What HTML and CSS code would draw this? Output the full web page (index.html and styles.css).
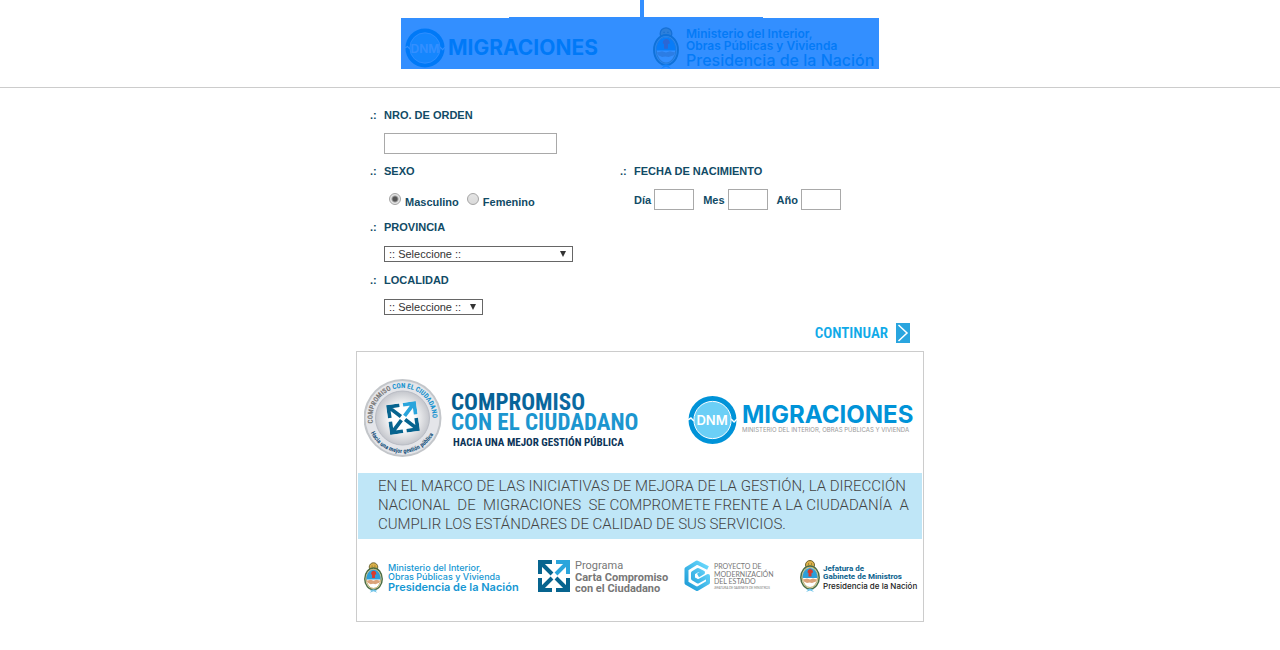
FILE: index.html
```html
<!DOCTYPE html>
<html lang="es">
<head>
<meta charset="utf-8">
<title>Dirección Nacional de Migraciones</title>
<link rel="stylesheet" href="styles.css">
</head>
<body>
<svg class="defs" width="0" height="0" aria-hidden="true">
  <defs>
    <symbol id="crest" viewBox="0 0 20 32">
      <circle class="c-sun" cx="10" cy="5" r="4.5"/>
      <path class="c-face" d="M8 4h1M11 4h1M8 6.500h4"/>
      <ellipse class="c-wreath" cx="10" cy="17.500" rx="9.200" ry="11.500"/>
      <ellipse class="c-low" cx="10" cy="17.500" rx="7.500" ry="10"/>
      <path class="c-sky" d="M2.500 18C2.500 4.500 17.500 4.500 17.500 18z"/>
      <path class="c-cap" d="M8.500 16.500V13L7.500 12.500q0-3.500 3-3.500 2.500.5 2.500 3.500l-1.500.5v3.500z"/>
      <path class="c-hands" d="M3 19.500l4-1 3 1 3-1 4 1-1 2-4 1.500-2.500-.5-2.500.5-3-1.500z"/>
      <path class="c-ribbon" d="M6 29.500l4-1 4 1-2 .500 2 2-4-1.500-4 1.500 2-2z"/>
    </symbol>
    <symbol id="dnm" viewBox="0 0 50 50">
      <circle class="d-ring" cx="25" cy="25" r="24.500"/>
      <circle class="d-disc" cx="25" cy="25" r="19"/>
      <path class="d-wave" d="M0 25l3-2 3 3M50 24l-3 3-3-3"/>
    </symbol>
    <symbol id="thin-arrows" viewBox="0 0 32 32">
      <g class="t-dark">
        <path d="M2 14V2h12M3 3l11 11"/>
        <path d="M2 18v12h12M3 29l11-11"/>
        <path d="M30 18v12H18M29 29L18 18"/>
      </g>
      <path class="t-light" d="M30 14V2H18M29 3L18 14"/>
    </symbol>
  </defs>
</svg>

<header class="header">
  <div class="stem"></div>
  <div class="edge"></div>
  <svg class="masthead" viewBox="0 0 478 51" role="img" aria-label="Migraciones, Presidencia de la Nación">
    <use href="#dnm" x="4" y="10" width="40" height="40"/>
    <text class="dnm-text" x="24" y="35" font-size="12" text-anchor="middle">DNM</text>
    <text class="brand" x="47" y="37" font-size="21">MIGRACIONES</text>
    <use href="#crest" x="252" y="9" width="26" height="42"/>
    <text class="ministry strong" x="285" y="20" font-size="12">Ministerio del Interior,</text>
    <text class="ministry strong" x="285" y="32" font-size="12">Obras Públicas y Vivienda</text>
    <text class="ministry" x="285" y="48" font-size="16">Presidencia de la Nación</text>
    <rect class="veil" width="478" height="51"/>
  </svg>
</header>

<main class="main">
  <form class="form">
    <div class="field">
      <label class="caption" for="orden">NRO. DE ORDEN</label>
      <div class="control"><input class="box" id="orden" type="text"></div>
    </div>
    <div class="pair">
      <div class="field" role="radiogroup" aria-labelledby="sexo">
        <span class="caption" id="sexo">SEXO</span>
        <div class="control radios">
          <label class="option"><input class="radio" type="radio" name="sexo" checked>Masculino</label>
          <label class="option"><input class="radio" type="radio" name="sexo">Femenino</label>
        </div>
      </div>
      <div class="field" role="group" aria-labelledby="fecha">
        <span class="caption" id="fecha">FECHA DE NACIMIENTO</span>
        <div class="control dates">
          <label class="part">Día<input class="box small" type="text"></label>
          <label class="part">Mes<input class="box small" type="text"></label>
          <label class="part">Año<input class="box small" type="text"></label>
        </div>
      </div>
    </div>
    <div class="field">
      <label class="caption" for="provincia">PROVINCIA</label>
      <div class="control choice"><span class="drop wide"><select class="select" id="provincia"><option>:: Seleccione ::</option></select></span></div>
    </div>
    <div class="field">
      <label class="caption" for="localidad">LOCALIDAD</label>
      <div class="control choice"><span class="drop"><select class="select" id="localidad"><option>:: Seleccione ::</option></select></span></div>
    </div>
    <button class="next" type="submit">CONTINUAR
      <svg class="next-icon" viewBox="0 0 14 20" aria-hidden="true"><path class="next-bg" d="M0 0h14v20H0z"/><path class="next-arrow" d="M2.500 2l8.500 8-8.500 8"/></svg>
    </button>
  </form>

  <section class="panel">
    <div class="top">
      <svg class="commitment" viewBox="0 0 282 82" role="img" aria-label="Compromiso con el ciudadano">
        <defs>
          <radialGradient id="steel"><stop offset="0.4" stop-color="#fff"/><stop offset="1" stop-color="#c4c6cc"/></radialGradient>
          <linearGradient id="deep"><stop offset="0" stop-color="#045d90"/><stop offset="1" stop-color="#0a6ba3"/></linearGradient>
          <path id="arc-top" d="M9 46.200A30 30 0 1 1 66 53"/>
          <path id="arc-bottom" d="M6.800 55.800A35 35 0 0 0 73.500 41"/>
        </defs>
        <circle cx="38.500" cy="41" r="39" fill="#c3c6ca"/>
        <circle cx="38.500" cy="41" r="37" fill="#e4e5e9"/>
        <circle cx="38.500" cy="41" r="27" fill="url(#steel)" stroke="#b9bcc4"/>
        <text class="seal-text"><textPath href="#arc-top"><tspan fill="#777">COMPROMISO</tspan> <tspan fill="#1592cf">CON EL CIUDADANO</tspan></textPath></text>
        <text class="seal-text low"><textPath href="#arc-bottom">Hacia una mejor gestión pública</textPath></text>
        <g transform="rotate(-8 39 41)"><use href="#thin-arrows" x="24" y="26" width="30" height="30"/></g>
        <text class="narrow" x="87" y="33" font-size="23" fill="url(#deep)">COMPROMISO</text>
        <text class="narrow" x="87" y="53" font-size="23" fill="#1c96cf">CON EL CIUDADANO</text>
        <text class="narrow" x="89" y="69" font-size="11" fill="#0b3458">HACIA UNA MEJOR GESTIÓN PÚBLICA</text>
      </svg>
      <svg class="migraciones" viewBox="0 0 232 50" role="img" aria-label="Migraciones">
        <use href="#dnm" x="0" y="0" width="49" height="50"/>
        <text class="dnm-text" x="24" y="30" font-size="13" text-anchor="middle">DNM</text>
        <text class="brand" x="54" y="28" font-size="24">MIGRACIONES</text>
        <text class="tagline" x="54" y="37" font-size="6">MINISTERIO DEL INTERIOR, OBRAS PÚBLICAS Y VIVIENDA</text>
      </svg>
    </div>
    <p class="band">EN EL MARCO DE LAS INICIATIVAS DE MEJORA DE LA GESTIÓN, LA DIRECCIÓN
NACIONAL  DE  MIGRACIONES  SE COMPROMETE FRENTE A LA CIUDADANÍA  A
CUMPLIR LOS ESTÁNDARES DE CALIDAD DE SUS SERVICIOS.</p>
    <div class="sponsors">
      <svg class="presidencia" viewBox="0 0 160 36" role="img" aria-label="Presidencia de la Nación">
        <use href="#crest" x="0" y="3" width="19" height="31"/>
        <text class="ministry" x="24" y="12" font-size="9">Ministerio del Interior,</text>
        <text class="ministry" x="24" y="21" font-size="9">Obras Públicas y Vivienda</text>
        <text class="ministry strong" x="24" y="32" font-size="11">Presidencia de la Nación</text>
      </svg>
      <svg class="carta" viewBox="0 0 132 36" role="img" aria-label="Programa Carta Compromiso">
        <use href="#thin-arrows" x="0" y="1" width="32" height="32"/>
        <text class="carta-text" x="37" y="10" font-size="11">Programa</text>
        <text class="carta-text bold" x="37" y="22" font-size="11">Carta Compromiso</text>
        <text class="carta-text bold" x="37" y="33" font-size="11">con el Ciudadano</text>
      </svg>
      <svg class="proyecto" viewBox="0 0 102 36" role="img" aria-label="Proyecto de modernización del Estado">
        <defs><linearGradient id="hex" x1="0" y1="1" x2="1" y2="0"><stop offset="0" stop-color="#1b9ad6"/><stop offset="1" stop-color="#6fdcff"/></linearGradient></defs>
        <path d="M24 9L13 3.500 2.500 10v14L13 30l11-6.500V17l-10 5.500-5-3V14l5-3 5 2.500-5 3" fill="none" stroke="url(#hex)" stroke-width="4" stroke-linejoin="round"/>
        <text class="project" x="30" y="10" font-size="7">PROYECTO DE</text>
        <text class="project" x="30" y="18" font-size="7">MODERNIZACIÓN</text>
        <text class="project" x="30" y="25" font-size="7">DEL ESTADO</text>
        <text class="project" x="30" y="30" font-size="3">JEFATURA DE GABINETE DE MINISTROS</text>
      </svg>
      <svg class="jefatura" viewBox="0 0 119 36" role="img" aria-label="Jefatura de Gabinete de Ministros">
        <use href="#crest" x="0" y="1" width="20" height="32"/>
        <text class="cabinet" x="23" y="12" font-size="8">Jefatura de</text>
        <text class="cabinet" x="23" y="20" font-size="8">Gabinete de Ministros</text>
        <text class="cabinet dark" x="23" y="30" font-size="8">Presidencia de la Nación</text>
      </svg>
    </div>
  </section>
</main>
</body>
</html>
```

FILE: styles.css
```css
body {
  margin: 0;
  background: #fff;
  color: #114b66;
  font: bold 11px/16px "Liberation Sans", Arial, sans-serif;
}

.defs {
  position: absolute;
}

/* Header */
.header {
  display: flex;
  flex-direction: column;
  align-items: center;
  padding-bottom: 18px;
  border-bottom: 1px solid #ccc;
}

.stem {
  width: 4px;
  height: 17px;
  margin-left: 4px;
  background: #338fff;
}

.edge {
  width: 254px;
  height: 1px;
  margin-right: 8px;
  background: #338fff;
}

.masthead {
  width: 478px;
  height: 51px;
  background: #fff;
}

.veil {
  fill: #0073ff;
  fill-opacity: 0.8;
}

/* Emblems */
.d-ring { fill: #0093d8; }
.d-disc { fill: #6bcff6; stroke: #fff; stroke-width: 1; }
.d-wave { fill: none; stroke: #fff; stroke-width: 1.5; }
.c-sun { fill: #dcb14a; stroke: #6d6434; stroke-width: 1; }
.c-face { fill: none; stroke: #705a20; stroke-width: 1; }
.c-wreath { fill: #d8e5ce; stroke: #4c6c43; stroke-width: 1.5; }
.c-low { fill: #fff; stroke: #b89b4b; stroke-width: 0.8; }
.c-sky { fill: #2c9fda; }
.c-cap { fill: #d83a2e; }
.c-hands { fill: #dba37a; }
.c-ribbon { fill: #6fc3e8; }
.t-dark, .t-light { fill: none; stroke: #07648f; stroke-width: 4; }
.t-light { stroke: #2aa5dc; }

.brand {
  fill: #0093d8;
  font-family: Inter, sans-serif;
  font-weight: 700;
}

.dnm-text {
  fill: #fff;
  font-family: Inter, sans-serif;
  font-weight: 600;
}

.ministry {
  fill: #1597d3;
  font-family: Inter, sans-serif;
  font-weight: 500;
}

.strong { font-weight: 600; }

/* Form */
.main {
  width: 568px;
  max-width: 100%;
  margin: 0 auto;
}

.form {
  display: flex;
  flex-direction: column;
  padding: 19px 14px 8px;
}

.field {
  display: flex;
  flex-direction: column;
  gap: 10px;
  margin-bottom: 9px;
}

.caption::before {
  content: ".:";
  display: inline-block;
  width: 14px;
}

.pair {
  display: grid;
  grid-template-columns: 250px 1fr;
}

.control {
  display: flex;
  align-items: center;
  height: 21px;
  margin-left: 14px;
}

.choice { height: 18px; }

.box {
  box-sizing: border-box;
  width: 173px;
  height: 21px;
  padding: 1px 3px;
  border: 1px solid #a9a9a9;
  background: #fff;
  font: 11px "Liberation Sans", Arial, sans-serif;
}

.small { width: 40px; }

.radios {
  gap: 8px;
  padding-left: 5px;
}

.option {
  display: flex;
  align-items: flex-end;
  gap: 4px;
  height: 21px;
}

.radio {
  appearance: none;
  box-sizing: border-box;
  width: 12px;
  height: 12px;
  margin: 0 0 5px;
  border: 1px solid #a4a4a4;
  border-radius: 50%;
  background: linear-gradient(#e4e4e4, #dadada);
}

.radio:checked {
  background: radial-gradient(circle, #555 2px, #e4e4e4 4px);
}

.dates { gap: 9px; }

.part {
  display: flex;
  align-items: center;
  gap: 3px;
}

.drop {
  display: grid;
  width: 99px;
  align-items: center;
}

.wide { width: 189px; }

.select, .drop::after { grid-area: 1 / 1; }

.select {
  appearance: none;
  box-sizing: border-box;
  width: 100%;
  height: 16px;
  padding: 0 4px;
  border: 1px solid #666;
  border-radius: 0;
  background: #fff;
  color: #333;
  font: 11px/14px "Liberation Sans", Arial, sans-serif;
}

.drop::after {
  content: "";
  justify-self: end;
  width: 6px;
  height: 6px;
  margin-right: 7px;
  background: #333;
  clip-path: polygon(0 0, 100% 0, 50% 100%);
  pointer-events: none;
}

.next {
  display: flex;
  align-items: center;
  align-self: flex-end;
  gap: 8px;
  height: 20px;
  margin-top: -2px;
  padding: 0;
  border: 0;
  background: none;
  color: #10aae8;
  font: 600 15px/20px "Roboto Condensed", "Liberation Sans Narrow", sans-serif;
}

.next-icon {
  width: 14px;
  height: 20px;
}

.next-bg { fill: #29a5df; }
.next-arrow { fill: none; stroke: #fff; stroke-width: 1.5; }

/* Commitment panel */
.panel {
  padding: 0 1px;
  border: 1px solid #ccc;
}

.top {
  display: flex;
  align-items: center;
  justify-content: space-between;
  padding: 25px 2px 14px 6px;
}

.commitment { width: 282px; height: 82px; }

.migraciones {
  width: 232px;
  height: 50px;
  margin-top: 3px;
}

.narrow {
  font-family: "Roboto Condensed", "Liberation Sans Narrow", sans-serif;
  font-weight: 700;
}

.seal-text {
  font: bold 7px "Roboto Condensed", "Liberation Sans Narrow", sans-serif;
}

.low { font-size: 6px; fill: #14507a; }

.tagline {
  fill: #999;
  font-family: Inter, sans-serif;
  font-weight: 400;
}

.band {
  margin: 0;
  padding: 4px 18px 5px 20px;
  background: #bfe6f7;
  color: #444;
  font: 300 15px/19px Roboto, sans-serif;
  white-space: pre;
}

.sponsors {
  display: flex;
  gap: 14px;
  padding: 20px 0 26px 6px;
}

.sponsors svg { overflow: visible; }

.presidencia { width: 160px; height: 36px; }
.carta { width: 132px; height: 36px; }
.proyecto { width: 102px; height: 36px; }
.jefatura { width: 119px; height: 36px; }

.carta-text {
  fill: #777;
  font-family: Roboto, sans-serif;
  font-weight: 400;
}

.bold { font-weight: 700; }

.project {
  fill: #777;
  font-family: Lato, sans-serif;
  font-weight: 400;
}

.cabinet {
  fill: #07608c;
  font-family: Roboto, sans-serif;
  font-weight: 700;
}

.dark {
  fill: #222;
  font-family: Inter, sans-serif;
  font-weight: 500;
}
```
